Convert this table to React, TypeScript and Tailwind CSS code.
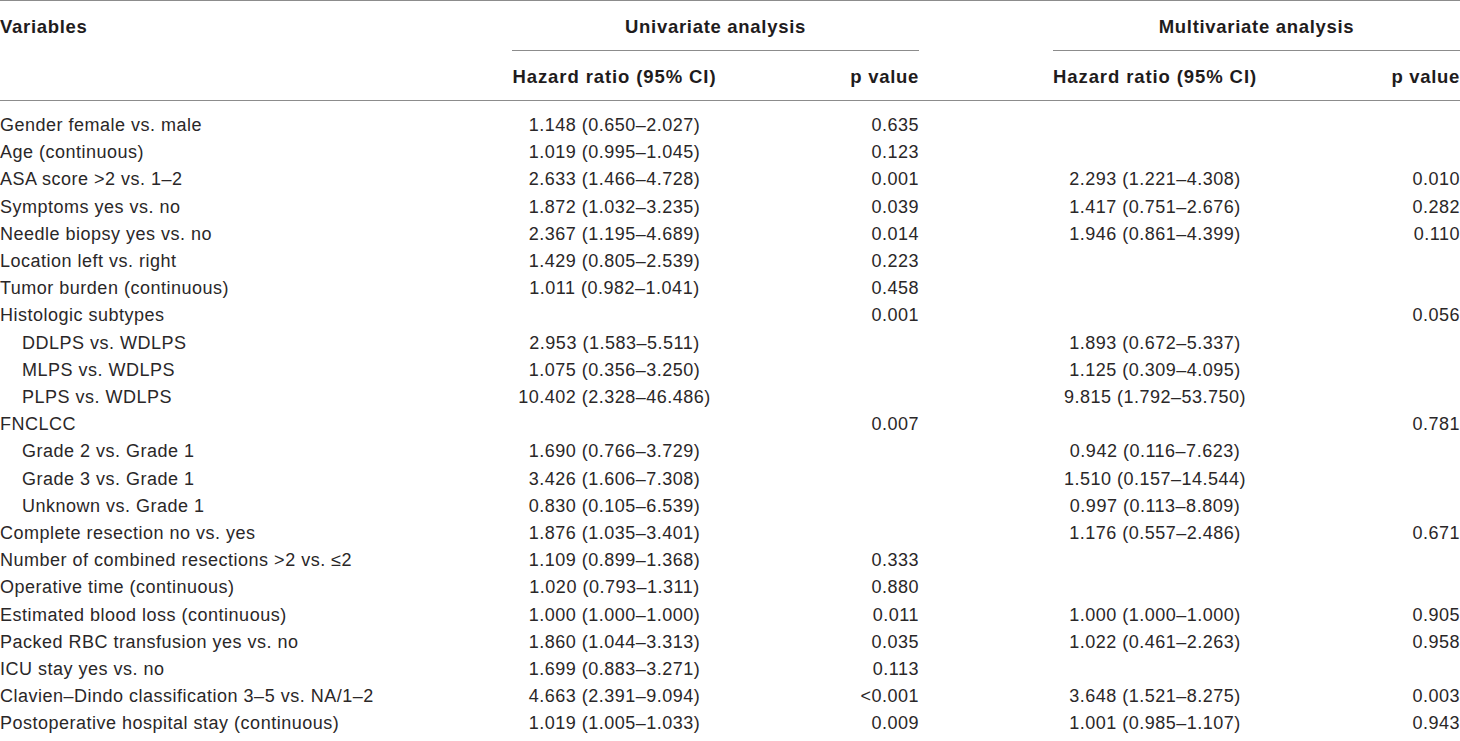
type Row = {
  label: string;
  indent?: boolean;
  uHr?: string;
  uP?: string;
  mHr?: string;
  mP?: string;
};

const rows: Row[] = [
  { label: "Gender female vs. male", uHr: "1.148 (0.650–2.027)", uP: "0.635" },
  { label: "Age (continuous)", uHr: "1.019 (0.995–1.045)", uP: "0.123" },
  { label: "ASA score >2 vs. 1–2", uHr: "2.633 (1.466–4.728)", uP: "0.001", mHr: "2.293 (1.221–4.308)", mP: "0.010" },
  { label: "Symptoms yes vs. no", uHr: "1.872 (1.032–3.235)", uP: "0.039", mHr: "1.417 (0.751–2.676)", mP: "0.282" },
  { label: "Needle biopsy yes vs. no", uHr: "2.367 (1.195–4.689)", uP: "0.014", mHr: "1.946 (0.861–4.399)", mP: "0.110" },
  { label: "Location left vs. right", uHr: "1.429 (0.805–2.539)", uP: "0.223" },
  { label: "Tumor burden (continuous)", uHr: "1.011 (0.982–1.041)", uP: "0.458" },
  { label: "Histologic subtypes", uP: "0.001", mP: "0.056" },
  { label: "DDLPS vs. WDLPS", indent: true, uHr: "2.953 (1.583–5.511)", mHr: "1.893 (0.672–5.337)" },
  { label: "MLPS vs. WDLPS", indent: true, uHr: "1.075 (0.356–3.250)", mHr: "1.125 (0.309–4.095)" },
  { label: "PLPS vs. WDLPS", indent: true, uHr: "10.402 (2.328–46.486)", mHr: "9.815 (1.792–53.750)" },
  { label: "FNCLCC", uP: "0.007", mP: "0.781" },
  { label: "Grade 2 vs. Grade 1", indent: true, uHr: "1.690 (0.766–3.729)", mHr: "0.942 (0.116–7.623)" },
  { label: "Grade 3 vs. Grade 1", indent: true, uHr: "3.426 (1.606–7.308)", mHr: "1.510 (0.157–14.544)" },
  { label: "Unknown vs. Grade 1", indent: true, uHr: "0.830 (0.105–6.539)", mHr: "0.997 (0.113–8.809)" },
  { label: "Complete resection no vs. yes", uHr: "1.876 (1.035–3.401)", mHr: "1.176 (0.557–2.486)", mP: "0.671" },
  { label: "Number of combined resections >2 vs. ≤2", uHr: "1.109 (0.899–1.368)", uP: "0.333" },
  { label: "Operative time (continuous)", uHr: "1.020 (0.793–1.311)", uP: "0.880" },
  { label: "Estimated blood loss (continuous)", uHr: "1.000 (1.000–1.000)", uP: "0.011", mHr: "1.000 (1.000–1.000)", mP: "0.905" },
  { label: "Packed RBC transfusion yes vs. no", uHr: "1.860 (1.044–3.313)", uP: "0.035", mHr: "1.022 (0.461–2.263)", mP: "0.958" },
  { label: "ICU stay yes vs. no", uHr: "1.699 (0.883–3.271)", uP: "0.113" },
  { label: "Clavien–Dindo classification 3–5 vs. NA/1–2", uHr: "4.663 (2.391–9.094)", uP: "<0.001", mHr: "3.648 (1.521–8.275)", mP: "0.003" },
  { label: "Postoperative hospital stay (continuous)", uHr: "1.019 (1.005–1.033)", uP: "0.009", mHr: "1.001 (0.985–1.107)", mP: "0.943" },
];

function App() {
  return (
    <div className="w-[1460px] h-[741px] bg-white overflow-hidden text-[#231f20] font-['Liberation_Sans',Arial,sans-serif]">
      <table className="w-[1460px] table-fixed border-collapse">
        <colgroup>
          <col className="w-[512px]" />
          <col className="w-[205px]" />
          <col className="w-[202px]" />
          <col className="w-[134px]" />
          <col className="w-[204px]" />
          <col className="w-[203px]" />
        </colgroup>
        <thead className="text-[18.5px] font-bold tracking-[0.7px] text-[#1f1c1d]">
          <tr className="border-t border-[#8c8c8c]">
            <th className="h-[50px] p-0 pt-[15px] align-top text-left leading-[22px]">Variables</th>
            <th colSpan={2} className="h-[50px] p-0 pt-[15px] align-top text-center leading-[22px] border-b border-[#8c8c8c]">
              Univariate analysis
            </th>
            <th className="p-0" />
            <th colSpan={2} className="h-[50px] p-0 pt-[15px] align-top text-center leading-[22px] border-b border-[#8c8c8c]">
              Multivariate analysis
            </th>
          </tr>
          <tr className="border-b border-[#8c8c8c]">
            <th className="h-[50px] p-0" />
            <th className="h-[50px] p-0 pt-[15px] align-top text-center leading-[22px] tracking-[0.9px] whitespace-nowrap">
              Hazard ratio (95% CI)
            </th>
            <th className="h-[50px] p-0 pt-[15px] align-top text-right leading-[22px] whitespace-nowrap">p value</th>
            <th className="p-0" />
            <th className="h-[50px] p-0 pt-[15px] align-top text-center leading-[22px] tracking-[0.9px] whitespace-nowrap">
              Hazard ratio (95% CI)
            </th>
            <th className="h-[50px] p-0 pt-[15px] align-top text-right leading-[22px] whitespace-nowrap">p value</th>
          </tr>
        </thead>
        <tbody className="text-[18px] leading-[27.2px] tracking-[0.5px] text-[#2a2728]">
          {rows.map((r, i) => {
            const pad = i === 0 ? "pt-[11px]" : "";
            return (
              <tr key={r.label}>
                <td className={`p-0 ${pad} whitespace-nowrap ${r.indent ? "pl-[22px]" : ""}`}>{r.label}</td>
                <td className={`p-0 ${pad} text-center whitespace-nowrap`}>{r.uHr}</td>
                <td className={`p-0 ${pad} text-right`}>{r.uP}</td>
                <td className={`p-0 ${pad}`} />
                <td className={`p-0 ${pad} text-center whitespace-nowrap`}>{r.mHr}</td>
                <td className={`p-0 ${pad} text-right`}>{r.mP}</td>
              </tr>
            );
          })}
        </tbody>
      </table>
    </div>
  );
}

export default App;
